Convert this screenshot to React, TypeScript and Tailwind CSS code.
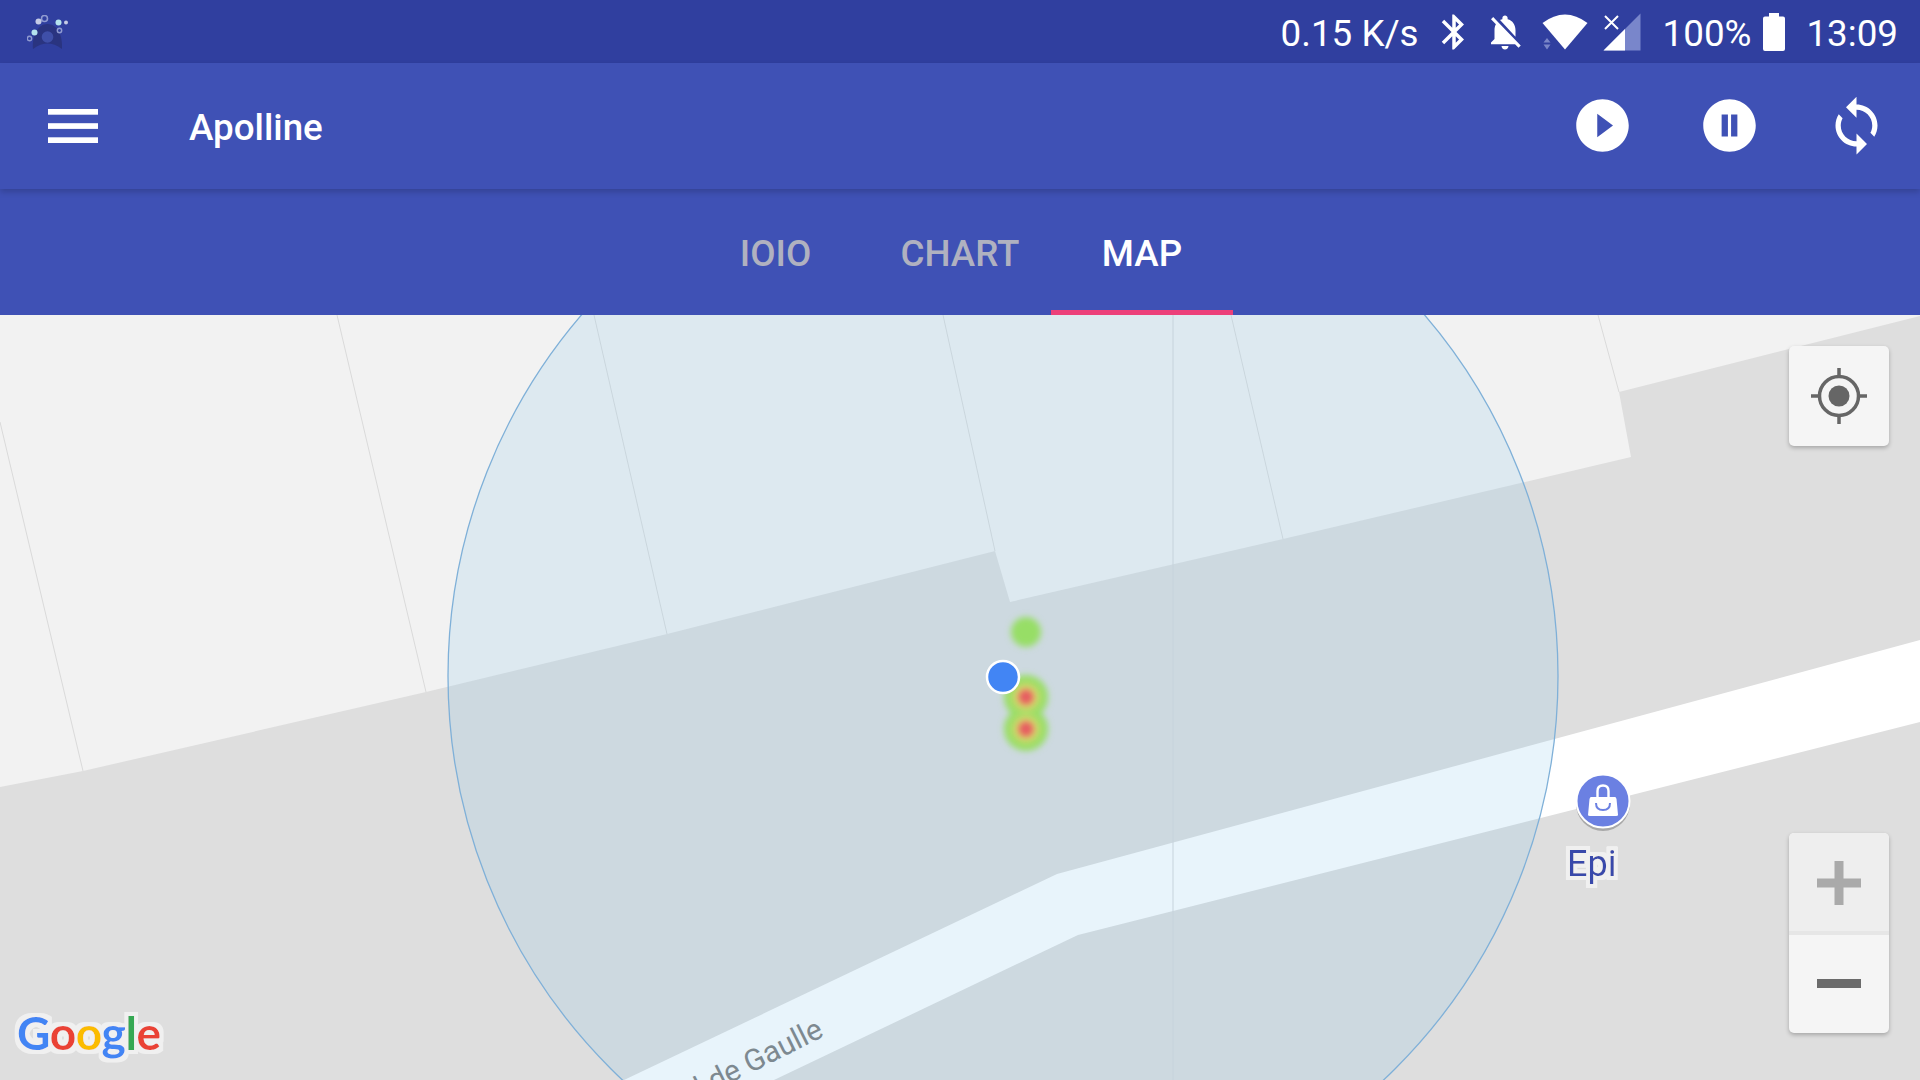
import React from "react";

const seams = [
  "M0 422 L83 771",
  "M337 315 L426 692",
  "M594 315 L667 634",
  "M943 315 L995 551",
  "M1231 315 L1283 539",
  "M1598 315 L1619 392",
];

const googleLetters = [
  { ch: "G", fill: "#4285f4" },
  { ch: "o", fill: "#ea4335" },
  { ch: "o", fill: "#fbbc05" },
  { ch: "g", fill: "#4285f4" },
  { ch: "l", fill: "#34a853" },
  { ch: "e", fill: "#ea4335" },
];

function AppLogo() {
  return (
    <svg viewBox="27 14 41 34" className="w-[41px] h-[34px]">
      <path d="M33 48 C32 34 38 23 47.5 23 C57 23 63 34 62 48 C57 44 52 42.5 47.5 42.5 C43 42.5 38 44 33 48 Z" fill="#2a3480" />
      <circle cx="47.5" cy="36" r="5.8" fill="#3f4fa8" />
      <circle cx="44.5" cy="17.5" r="3" fill="none" stroke="#8f9ad0" strokeWidth="1.6" />
      <circle cx="38.5" cy="20.5" r="3" fill="#c5cbe6" />
      <circle cx="58.5" cy="21.5" r="3" fill="#b5e3ee" />
      <circle cx="66" cy="21.5" r="2" fill="#c5cbe6" />
      <circle cx="34.5" cy="31.5" r="3" fill="#b5e3ee" />
      <circle cx="59.5" cy="29.5" r="2.2" fill="none" stroke="#8f9ad0" strokeWidth="1.4" />
      <circle cx="29.5" cy="37.5" r="2.2" fill="none" stroke="#8f9ad0" strokeWidth="1.4" />
    </svg>
  );
}

function StatusIcons() {
  return (
    <>
      <svg viewBox="0 0 24 24" className="w-[42px] h-[42px] ml-[14px]" fill="#fff">
        <path d="M17.71 7.71L12 2h-1v7.59L6.41 5 5 6.41 10.59 12 5 17.59 6.41 19 11 14.41V22h1l5.71-5.71-4.3-4.29 4.3-4.29zM13 5.83l1.88 1.88L13 9.59V5.83zm1.88 10.46L13 18.17v-3.76l1.88 1.88z" />
      </svg>
      <svg viewBox="0 0 24 24" className="w-[42px] h-[42px] ml-[9px]" fill="#fff">
        <path d="M20 18.69L7.84 6.14 5.27 3.49 4 4.76l2.8 2.8v.01c-.52.99-.8 2.16-.8 3.42v5l-2 2v1h13.73l2 2L21 19.72l-1-1.03zM12 22c1.11 0 2-.89 2-2h-4c0 1.11.89 2 2 2zm6-7.32V11c0-3.08-1.64-5.64-4.5-6.32V4c0-.83-.67-1.5-1.5-1.5s-1.5.67-1.5 1.5v.68c-.15.03-.29.08-.42.12-.1.03-.2.07-.3.11h-.01c-.2.08-.4.17-.59.27-.01 0-.01 0-.02.01L18 14.68z" />
      </svg>
      <svg viewBox="0 0 46 36" className="w-[46px] h-[36px] ml-[16px]">
        <path d="M23 35.5 L0.5 9 Q23 -8 45.5 9 Z" fill="#fff" />
        <path d="M5 24 L8.5 28.5 H1.5 Z M1.5 30.5 H8.5 L5 35.5 Z" fill="#7a86c8" />
      </svg>
      <svg viewBox="0 0 38 38" className="w-[38px] h-[38px] ml-[15px]">
        <path d="M37.5 0.5 V37.5 H0.5 Z" fill="#7986cb" />
        <path d="M22 16 V37.5 H0.5 Z" fill="#fff" />
        <path d="M2 3 L15 16 M15 3 L2 16" stroke="#fff" strokeWidth="2" fill="none" />
      </svg>
      <span className="ml-[22px] pt-[4px]">100%</span>
      <svg viewBox="0 0 22 38" className="w-[22px] h-[38px] ml-[12px]" fill="#fff">
        <path d="M6 0 H16 V3.5 H20 Q22 3.5 22 5.5 V36 Q22 38 20 38 H2 Q0 38 0 36 V5.5 Q0 3.5 2 3.5 H6 Z" />
      </svg>
      <span className="ml-[21px] pt-[4px]">13:09</span>
    </>
  );
}

function MapLayer() {
  return (
    <svg viewBox="0 315 1920 765" className="absolute inset-0 w-full h-full">
      <defs>
        <filter id="soft" x="-40%" y="-40%" width="180%" height="180%">
          <feGaussianBlur stdDeviation="3" />
        </filter>
        <filter id="softer" x="-40%" y="-40%" width="180%" height="180%">
          <feGaussianBlur stdDeviation="4" />
        </filter>
        {/* whitish outline that map labels get */}
        <filter id="halo" x="-15%" y="-25%" width="130%" height="150%">
          <feMorphology in="SourceAlpha" operator="dilate" radius="4" result="grown" />
          <feFlood floodColor="#f0f0f0" />
          <feComposite in2="grown" operator="in" result="outline" />
          <feMerge>
            <feMergeNode in="outline" />
            <feMergeNode in="SourceGraphic" />
          </feMerge>
        </filter>
        <clipPath id="radius">
          <circle cx="1003" cy="676" r="555" />
        </clipPath>
      </defs>

      <rect x="0" y="315" width="1920" height="765" fill="#dedede" />
      <path
        d="M0 315 H1920 V316 L1619 392 L1631 457 L1283 539 L1010 602 L995 551 L667 634 L426 692 L83 771 L0 787 Z"
        fill="#f2f2f2"
      />
      {seams.map((d) => (
        <path key={d} d={d} stroke="#dadada" strokeWidth="1" fill="none" />
      ))}
      <path d="M624 1080 L1057 874 L1920 640 V722 L1078 935 L774 1080 Z" fill="#fff" />

      <circle cx="1003" cy="676" r="555" fill="#8ac6ea" fillOpacity="0.2" stroke="#7fb0d8" strokeWidth="1.3" />
      <path d="M1173 315 V1080" stroke="#c6d3dc" strokeWidth="1" clipPath="url(#radius)" />

      <text
        x="825"
        y="1036"
        textAnchor="end"
        transform="rotate(-26.5 825 1036)"
        fontSize="30"
        fill="#7d8990"
        fontFamily="Roboto, sans-serif"
      >
        Général de Gaulle
      </text>

      {/* heatmap */}
      <g filter="url(#soft)">
        <circle cx="1026" cy="632" r="15" fill="#97de66" />
        <circle cx="1026" cy="697" r="22" fill="#97de66" />
        <circle cx="1026" cy="729" r="22" fill="#97de66" />
      </g>
      <g filter="url(#softer)">
        <circle cx="1026" cy="697" r="13" fill="#e0d86c" />
        <circle cx="1026" cy="729" r="13" fill="#e0d86c" />
      </g>
      <g filter="url(#soft)">
        <circle cx="1026" cy="697" r="7.5" fill="#e65a60" />
        <circle cx="1026" cy="729" r="7.5" fill="#e65a60" />
      </g>
      <circle cx="1003" cy="677" r="16" fill="#4285f4" stroke="#fff" strokeWidth="2.5" />

      {/* shop marker */}
      <circle cx="1603" cy="804" r="27" fill="#a8a8a8" />
      <circle cx="1603" cy="801" r="26.5" fill="#6b80e2" stroke="#fff" strokeWidth="2" />
      <path d="M1597.5 797 V791 Q1597.5 785.5 1603 785.5 Q1608.5 785.5 1608.5 791 V797" fill="none" stroke="#fff" strokeWidth="2.4" />
      <path d="M1591 797 H1615 Q1616 797 1616.5 799 L1618 815 Q1618 816 1616 816 H1590 Q1588 816 1588 815 L1589.5 799 Q1590 797 1591 797 Z" fill="#fff" />
      <path d="M1596 803 Q1596 810 1603 810 Q1610 810 1610 803" fill="none" stroke="#6b80e2" strokeWidth="2" />

      <text x="1567" y="876" fontSize="36" fill="#3949ab" filter="url(#halo)" fontFamily="Roboto, sans-serif">
        Epi
      </text>

      <text x="17" y="1050" fontSize="46" fontWeight="700" letterSpacing="-0.4" filter="url(#halo)" fontFamily="Lato, sans-serif">
        {googleLetters.map((l, i) => (
          <tspan key={i} fill={l.fill}>
            {l.ch}
          </tspan>
        ))}
      </text>
    </svg>
  );
}

export default function App() {
  return (
    <div className="w-[1920px] h-[1080px] flex flex-col overflow-hidden font-[Roboto,sans-serif] bg-[#dedede]">
      {/* status bar */}
      <div className="h-[63px] shrink-0 bg-[#303f9f] flex items-center justify-between pl-[27px] pr-[22px] text-white text-[36.75px]">
        <AppLogo />
        <div className="flex items-center">
          <span className="pt-[4px]">0.15 K/s</span>
          <StatusIcons />
        </div>
      </div>

      {/* toolbar */}
      <div className="relative z-10 h-[126px] shrink-0 bg-[#3f51b5] flex items-center pl-[48px] pr-[32px] text-white shadow-[0_3px_6px_rgba(0,0,0,0.18)]">
        <svg viewBox="0 0 50 34" className="w-[50px] h-[34px]" fill="#fff">
          <rect x="0" y="0" width="50" height="5.7" />
          <rect x="0" y="14.2" width="50" height="5.7" />
          <rect x="0" y="28.3" width="50" height="5.7" />
        </svg>
        <span className="ml-[91px] pt-[4px] text-[36.75px] font-medium">Apolline</span>
        <div className="ml-auto pb-[2px] flex items-center gap-[64px]">
          <svg viewBox="0 0 24 24" className="w-[63px] h-[63px]" fill="#fff">
            <path d="M12 2C6.48 2 2 6.48 2 12s4.48 10 10 10 10-4.48 10-10S17.52 2 12 2zm-2 14.5v-9l6 4.5-6 4.5z" />
          </svg>
          <svg viewBox="0 0 24 24" className="w-[63px] h-[63px]" fill="#fff">
            <path
              fillRule="evenodd"
              d="M12 2C6.48 2 2 6.48 2 12s4.48 10 10 10 10-4.48 10-10S17.52 2 12 2zM9 7.8h2.4v8.4H9zM12.6 7.8H15v8.4h-2.4z"
            />
          </svg>
          <svg viewBox="0 0 24 24" className="w-[63px] h-[63px]" fill="#fff">
            <path d="M12 4V1L8 5l4 4V6c3.31 0 6 2.69 6 6 0 1.01-.25 1.97-.7 2.8l1.46 1.46C19.54 15.03 20 13.57 20 12c0-4.42-3.58-8-8-8zm0 14c-3.31 0-6-2.69-6-6 0-1.01.25-1.97.7-2.8L5.24 7.74C4.46 8.97 4 10.43 4 12c0 4.42 3.58 8 8 8v3l4-4-4-4v3z" />
          </svg>
        </div>
      </div>

      {/* tabs */}
      <div className="h-[126px] shrink-0 bg-[#3f51b5] flex justify-center text-[36.75px] font-medium">
        <div className="w-[182px] pt-[8px] pr-[5px] flex items-center justify-center border-b-[5px] border-transparent text-[#b0b1c0]">IOIO</div>
        <div className="w-[182px] pt-[8px] flex items-center justify-center border-b-[5px] border-transparent text-[#b0b1c0]">CHART</div>
        <div className="w-[182px] pt-[8px] flex items-center justify-center border-b-[5px] border-[#ec407a] text-white">MAP</div>
      </div>

      {/* map */}
      <div className="relative flex-1">
        <MapLayer />

        <div className="absolute left-[1789px] top-[31px] w-[100px] h-[100px] rounded-[5px] bg-[#f5f5f5] shadow-[0_2px_4px_rgba(0,0,0,0.25)] flex items-center justify-center">
          <svg viewBox="0 0 56 56" className="w-[56px] h-[56px]">
            <circle cx="28" cy="28" r="10.5" fill="#666" />
            <circle cx="28" cy="28" r="19.5" fill="none" stroke="#666" strokeWidth="3.5" />
            <path d="M28 0 V8 M28 48 V56 M0 28 H8 M48 28 H56" stroke="#666" strokeWidth="3.5" />
          </svg>
        </div>

        <div className="absolute left-[1789px] top-[518px] w-[100px] h-[200px] rounded-[5px] bg-[#f5f5f5] shadow-[0_2px_4px_rgba(0,0,0,0.25)] flex flex-col overflow-hidden">
          <div className="h-[98px] bg-[#eeeeee] flex items-center justify-center">
            <svg viewBox="0 0 44 44" className="w-[44px] h-[44px] mt-[2px]" fill="#aaaaaa">
              <path d="M17.5 0 H26.5 V17.5 H44 V26.5 H26.5 V44 H17.5 V26.5 H0 V17.5 H17.5 Z" />
            </svg>
          </div>
          <div className="h-[4px] bg-[#e6e6e6]" />
          <div className="flex-1 pb-[2px] flex items-center justify-center">
            <div className="w-[44px] h-[9px] bg-[#6b6b6b]" />
          </div>
        </div>
      </div>
    </div>
  );
}
